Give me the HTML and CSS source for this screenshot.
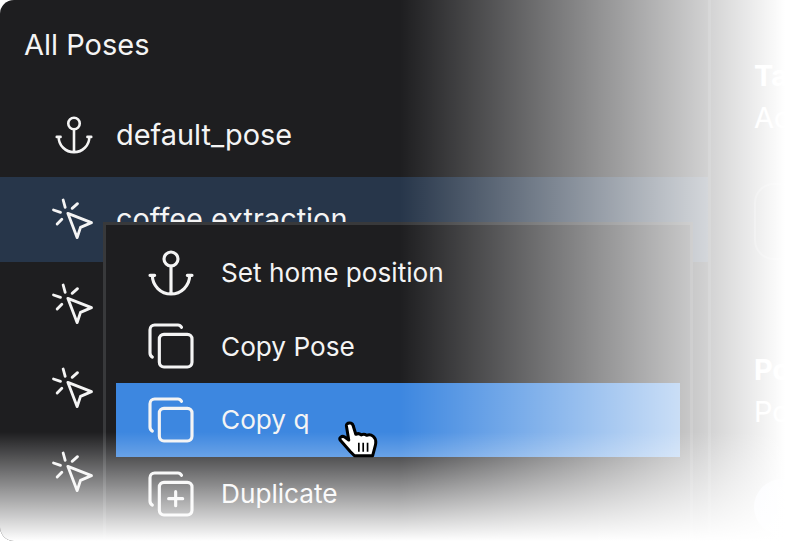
FILE: index.html
```html
<!DOCTYPE html>
<html lang="en">
<head>
    <meta charset="UTF-8">
    <title>All Poses</title>
    <link rel="stylesheet" href="styles.css">
</head>
<body>

    <svg class="defs" width="0" height="0">
        <symbol id="anchor" viewBox="0 0 24 24">
            <path d="M12 9v12m-8-8a8 8 0 0 0 16 0m1 0h-2m-14 0h-2"/>
            <circle cx="12" cy="6" r="3"/>
        </symbol>
        <symbol id="click" viewBox="154.5 588 138 138">
            <path class="thick" d="M162 630l21 7M191 600l6 22M234 611l-16 14M173 672l14-14"/>
            <path class="thick" d="M205 640l71 28-33 14-10 31z"/>
        </symbol>
        <symbol id="copy" viewBox="0 0 24 24">
            <rect x="7" y="7" width="14" height="14" rx="2"/>
            <path d="M4.012 16.737a2.005 2.005 0 0 1-1.012-1.737v-10c0-1.1.9-2 2-2h10c.75 0 1.158.385 1.5 1"/>
        </symbol>
        <symbol id="copy-plus" viewBox="0 0 24 24">
            <rect x="7" y="7" width="14" height="14" rx="2"/>
            <path d="M4.012 16.737a2.005 2.005 0 0 1-1.012-1.737v-10c0-1.1.9-2 2-2h10c.75 0 1.158.385 1.5 1"/>
            <path d="M11 14h6M14 11v6"/>
        </symbol>
    </svg>

    <div class="app">
        <div class="sidebar">
            <h2 class="title">All Poses</h2>
            <div class="pose">
                <svg class="icon"><use href="#anchor"/></svg>
                <span class="pose-name">default_pose</span>
            </div>
            <div class="pose selected">
                <svg class="icon"><use href="#click"/></svg>
                <span class="pose-name">coffee extraction</span>
            </div>
            <div class="pose"><svg class="icon"><use href="#click"/></svg></div>
            <div class="pose"><svg class="icon"><use href="#click"/></svg></div>
            <div class="pose"><svg class="icon"><use href="#click"/></svg></div>
        </div>

        <div class="details">
            <div class="field">
                <div class="field-name">Target</div>
                <div class="field-value">Active</div>
            </div>
            <div class="box"></div>
            <div class="field second">
                <div class="field-name">Pose</div>
                <div class="field-value">Position</div>
            </div>
            <div class="dot"></div>
        </div>

        <div class="menu">
            <div class="menu-item">
                <svg class="menu-icon"><use href="#anchor"/></svg>
                <span>Set home position</span>
            </div>
            <div class="menu-item">
                <svg class="menu-icon"><use href="#copy"/></svg>
                <span>Copy Pose</span>
            </div>
            <div class="menu-item active">
                <svg class="menu-icon"><use href="#copy"/></svg>
                <span>Copy q</span>
            </div>
            <div class="menu-item">
                <svg class="menu-icon"><use href="#copy-plus"/></svg>
                <span>Duplicate</span>
            </div>
        </div>

        <div class="fade-right"></div>
        <div class="fade-bottom"></div>

        <svg class="hand" viewBox="55 45 125 115">
            <path class="hand-shape" d="M80 62c-1-10 17-12 20-1l8 26c6-3 12-2 16 2 6-3 12-2 16 1 7-3 14-2 20 3 7 6 9 16 6 28l-8 30h-54l-12-12-30-34c-5-7 4-15 13-10l12 9z"/>
            <path class="hand-lines" d="M117 112v27M130 112v27M143 112v27"/>
        </svg>
    </div>

</body>
</html>
```

FILE: styles.css
```css
html, body {
    margin: 0;
    height: 100%;
    background-color: #fff;
    overflow: hidden;
}

body {
    font-family: Inter, "Liberation Sans", sans-serif;
    color: #f4f4f4;
}

.defs {
    position: absolute;
}

symbol {
    overflow: visible;
}

symbol path, symbol circle, symbol rect {
    fill: none;
    stroke: currentColor;
    stroke-width: 1.35;
    stroke-linecap: round;
    stroke-linejoin: round;
}

symbol path.thick {
    stroke-width: 8.5;
}

.app {
    position: relative;
    display: flex;
    width: 790px;
    height: 541px;
    background-color: #1e1e20;
    border-radius: 14px 0 0 14px;
    overflow: hidden;
}

.sidebar {
    width: 708px;
    flex-shrink: 0;
    border-right: 3px solid #38393b;
}

.title {
    margin: 0;
    height: 93px;
    padding: 28px 0 0 24px;
    box-sizing: border-box;
    font-size: 29px;
    line-height: 34px;
    font-weight: 400;
}

.pose {
    display: flex;
    align-items: center;
    gap: 19px;
    height: 84.3px;
    padding-left: 51px;
    font-size: 28.9px;
}

.pose-name {
    margin-bottom: 2px;
}

.pose.selected {
    background-color: #27364a;
}

.icon {
    width: 46px;
    height: 46px;
    flex-shrink: 0;
}

.details {
    flex: 1;
    min-width: 0;
    padding: 58px 0 0 43px;
    white-space: nowrap;
}

.field-name {
    font-size: 29px;
    line-height: 36px;
    font-weight: 700;
    color: #fff;
}

.field-value {
    margin-top: 6px;
    font-size: 29px;
    line-height: 36px;
    color: #fff;
}

.second {
    margin-top: 92px;
}

.box {
    width: 120px;
    height: 77px;
    margin-top: 47px;
    border: 2px solid #55565a;
    border-radius: 20px;
    box-sizing: border-box;
}

.dot {
    width: 56px;
    height: 56px;
    margin-top: 49px;
    border-radius: 50%;
    background-color: #aab8ee;
}

.menu {
    position: absolute;
    left: 103px;
    top: 222px;
    width: 590px;
    height: 340px;
    padding: 11px 10px;
    box-sizing: border-box;
    background-color: #1e1e20;
    border: 3px solid #38393b;
}

.menu-item {
    display: flex;
    align-items: center;
    gap: 22px;
    height: 73.6px;
    padding-left: 27px;
    font-size: 26.2px;
}

.menu-item.active {
    background-color: #3d87e0;
}

.menu-icon {
    width: 56px;
    height: 56px;
    flex-shrink: 0;
}

.fade-right, .fade-bottom {
    position: absolute;
    inset: 0;
}

.fade-right {
    background: linear-gradient(to right, rgba(255, 255, 255, 0) 400px, #fff 785px);
}

.fade-bottom {
    background: linear-gradient(to bottom, rgba(255, 255, 255, 0) 432px, #fff 541px);
}

.hand {
    position: absolute;
    left: 338px;
    top: 420px;
    width: 42px;
    height: 39px;
}

.hand-shape {
    fill: #fff;
    stroke: #000;
    stroke-width: 9;
    stroke-linejoin: round;
}

.hand-lines {
    fill: none;
    stroke: #000;
    stroke-width: 5;
}
```
